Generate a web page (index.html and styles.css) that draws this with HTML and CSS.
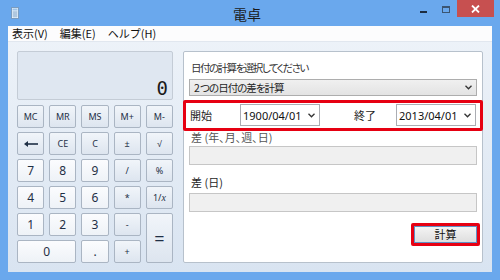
FILE: index.html
```html
<!DOCTYPE html>
<html lang="ja">
  <head>
    <meta charset="UTF-8" />
    <title>電卓</title>
    <link rel="stylesheet" href="styles.css">
  </head>
  <body>
    <div class="window">
      <div class="titlebar">
        <div class="title-left">
          <svg class="app-icon" width="8" height="12" viewBox="0 0 8 12">
            <rect x="0.5" y="0.5" width="7" height="11" fill="#e8f2fb" stroke="#7a9cc0" />
            <rect x="1.5" y="1.5" width="5" height="2" fill="#9fc4e8" />
            <path d="M1.5 5h5M1.5 7h5M1.5 9h5M3 4.5v6M5 4.5v6" stroke="#8fb0d0" stroke-width="0.8" />
          </svg>
        </div>
        <div class="title">電卓</div>
        <div class="caption">
          <div class="cap-btn cap-min"><span></span></div>
          <div class="cap-btn cap-max"><span></span></div>
          <div class="cap-btn cap-close">
            <svg width="9" height="8" viewBox="0 0 9 8">
              <path d="M1 0.5l7 7M8 0.5l-7 7" stroke="#fff" stroke-width="1.8" />
            </svg>
          </div>
        </div>
      </div>

      <div class="client">
        <div class="menubar">
          <span>表示(V)</span>
          <span>編集(E)</span>
          <span>ヘルプ(H)</span>
        </div>

        <div class="content">
          <div class="calc">
            <div class="display">0</div>
            <div class="keypad">
              <button class="key op small">MC</button>
              <button class="key op small">MR</button>
              <button class="key op small">MS</button>
              <button class="key op small">M+</button>
              <button class="key op small">M-</button>

              <button class="key op">
                <svg width="14" height="6" viewBox="0 0 14 6">
                  <path d="M14 3H3" stroke="#1f2f45" stroke-width="1.6" />
                  <path d="M0 3l4-3v6z" fill="#1f2f45" />
                </svg>
              </button>
              <button class="key op small">CE</button>
              <button class="key op small">C</button>
              <button class="key op small">±</button>
              <button class="key op small">√</button>

              <button class="key">7</button>
              <button class="key">8</button>
              <button class="key">9</button>
              <button class="key op small">/</button>
              <button class="key op small">%</button>

              <button class="key">4</button>
              <button class="key">5</button>
              <button class="key">6</button>
              <button class="key op small">*</button>
              <button class="key op small">1/<i>x</i></button>

              <button class="key">1</button>
              <button class="key">2</button>
              <button class="key">3</button>
              <button class="key op small">-</button>
              <button class="key op equals">=</button>

              <button class="key zero">0</button>
              <button class="key">.</button>
              <button class="key op small">+</button>
            </div>
          </div>

          <div class="panel">
            <div class="label first">日付の計算を選択してください</div>
            <div class="select">
              <span>2&nbsp;つの日付の差を計算</span>
              <svg class="chev" width="7" height="5" viewBox="0 0 7 5"><path d="M0.5 0.8l3 3 3-3" fill="none" stroke="#333" stroke-width="1.3" /></svg>
            </div>

            <div class="date-row">
              <span class="date-label">開始</span>
              <div class="date-box">
                <span>1900/04/01</span>
                <svg width="7" height="5" viewBox="0 0 7 5"><path d="M0.5 0.8l3 3 3-3" fill="none" stroke="#333" stroke-width="1.3" /></svg>
              </div>
              <span class="date-label end">終了</span>
              <div class="date-box">
                <span>2013/04/01</span>
                <svg width="7" height="5" viewBox="0 0 7 5"><path d="M0.5 0.8l3 3 3-3" fill="none" stroke="#333" stroke-width="1.3" /></svg>
              </div>
            </div>

            <div class="label diff1">差 (年、月、週、日)</div>
            <div class="result"></div>

            <div class="label diff2">差 (日)</div>
            <div class="result second"></div>

            <div class="actions">
              <div class="mark">
                <button class="calc-btn">計算</button>
              </div>
            </div>
          </div>
        </div>
      </div>
    </div>
  </body>
</html>
```

FILE: styles.css
```css
body {
  margin: 0;
  font-family: "Noto Sans", "Noto Sans CJK JP", sans-serif;
}
.window {
  width: 500px;
  height: 280px;
  background: #6aa8ed;
  display: flex;
  flex-direction: column;
}
.titlebar {
  height: 26px;
  display: grid;
  grid-template-columns: 1fr auto 1fr;
  align-items: start;
  padding-right: 6px;
}
.title-left {
  padding: 7px 0 0 11px;
}
.app-icon {
  display: block;
}
.title {
  font-family: "Noto Sans CJK JP", sans-serif;
  font-size: 14px;
  line-height: 14px;
  padding-top: 7px;
  color: #1a1a1a;
}
.caption {
  justify-self: end;
  display: flex;
}
.cap-btn {
  height: 17px;
  display: flex;
  align-items: center;
  justify-content: center;
}
.cap-min {
  width: 23px;
}
.cap-min span {
  width: 7px;
  height: 2px;
  margin-top: 6px;
  background: #1c2c40;
}
.cap-max {
  width: 22px;
}
.cap-max span {
  width: 6px;
  height: 4px;
  margin-top: 2px;
  border: 1px solid #3b5572;
  border-top-width: 2px;
}
.cap-close {
  width: 37px;
  background: #c75050;
}

.client {
  flex: 1;
  margin: 0 8px 8px;
  display: flex;
  flex-direction: column;
  background: linear-gradient(#eef3f9, #d9e4f1);
}
.menubar {
  height: 15px;
  background: #fcfcfd;
  border-bottom: 1px solid #e1e7ef;
  display: flex;
  gap: 12px;
  padding-left: 4px;
  font-family: "Noto Sans CJK JP", sans-serif;
  font-size: 11px;
  line-height: 15px;
  color: #111;
}
.content {
  flex: 1;
  display: flex;
  gap: 10px;
  padding: 9px;
}
.calc {
  width: 156px;
  display: flex;
  flex-direction: column;
  gap: 5px;
}
.display {
  height: 49px;
  border: 1px solid #c4ccd6;
  border-radius: 2px;
  background: #dfe7f1;
  text-align: right;
  font-family: "DejaVu Sans Mono", monospace;
  font-size: 19px;
  line-height: 19px;
  padding: 27px 4px 0 0;
  box-sizing: border-box;
  color: #1a1a1a;
}
.keypad {
  flex: 1;
  display: grid;
  grid-template-columns: repeat(5, 1fr);
  grid-template-rows: repeat(6, 1fr);
  gap: 4px 5px;
}
.key {
  margin: 0;
  padding: 0;
  border: 1px solid #aab5c3;
  border-radius: 2px;
  background: linear-gradient(#fbfcfe, #eef2f7);
  color: #1f2f45;
  font-family: "Noto Sans", sans-serif;
  font-size: 12px;
  display: flex;
  align-items: center;
  justify-content: center;
}
.key.op {
  background: linear-gradient(#f1f5fa, #dde5ef);
}
.key.small {
  font-size: 9px;
}
.key i {
  font-family: "Liberation Serif", serif;
  font-size: 10px;
}
.key.equals {
  grid-row: span 2;
  font-size: 18px;
}
.key.zero {
  grid-column: span 2;
}

.panel {
  flex: 1;
  background: #fff;
  border: 1px solid #b7c1cc;
  border-radius: 2px;
  padding: 0 5px;
  display: flex;
  flex-direction: column;
  font-family: "Noto Sans CJK JP", sans-serif;
  font-feature-settings: "palt";
  font-size: 11px;
  color: #1e1e1e;
}
.label {
  line-height: 12px;
  padding-left: 2px;
}
.label.first {
  margin-top: 9px;
  line-height: 14px;
  font-size: 10.5px;
  letter-spacing: -1.5px;
  color: #333;
}
.select {
  margin-top: 4px;
  height: 17px;
  box-sizing: border-box;
  border: 1px solid #adadad;
  background: linear-gradient(#f0f0f0, #e3e3e3);
  display: flex;
  align-items: center;
  justify-content: space-between;
  padding: 0 4px 0 4px;
  font-size: 10.5px;
  letter-spacing: -1px;
}
.date-row {
  margin: 4px -6px 0;
  border: 3px solid #e60012;
  border-radius: 2px;
  padding: 1px 3px 2px 4px;
  display: flex;
  align-items: center;
}
.date-label {
  width: 50px;
}
.date-label.end {
  width: 42px;
  margin-left: 34px;
}
.date-box {
  width: 80px;
  height: 22px;
  box-sizing: border-box;
  border: 1px solid #abadb3;
  display: flex;
  align-items: center;
  justify-content: space-between;
  padding: 0 4px 0 2px;
  font-family: "Noto Sans", sans-serif;
  font-size: 11px;
  color: #111;
}
.label.diff1 {
  margin-top: 0;
  color: #555;
}
.result {
  margin-top: 3px;
  height: 19px;
  box-sizing: border-box;
  border: 1px solid #c6c6c6;
  background: #f0f0f0;
}
.label.diff2 {
  margin-top: 11px;
}
.result.second {
  margin-top: 5px;
}
.actions {
  margin-top: 11px;
  margin-right: -3px;
  display: flex;
  justify-content: flex-end;
}
.mark {
  border: 3px solid #e60012;
  border-radius: 2px;
}
.calc-btn {
  display: block;
  width: 63px;
  height: 17px;
  margin: 0;
  padding: 0;
  border: 1px solid #5f8fc4;
  background: linear-gradient(#f4f4f4, #dedede);
  font-family: "Noto Sans CJK JP", sans-serif;
  font-size: 11px;
  line-height: 15px;
  color: #111;
}
```
